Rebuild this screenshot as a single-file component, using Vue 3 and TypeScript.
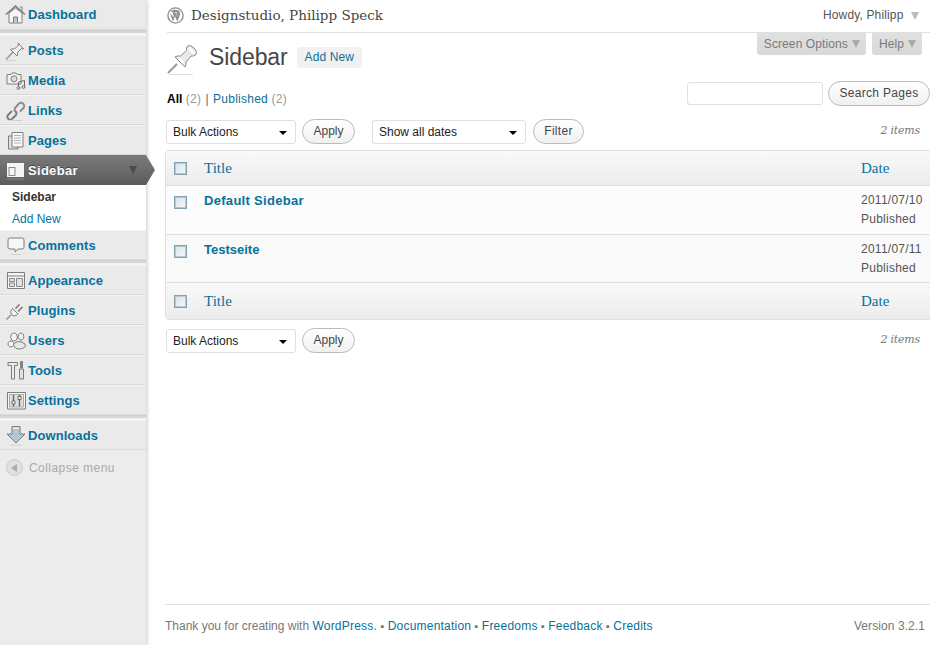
<script setup lang="ts">
interface Shape { d: string; fill?: string; stroke?: string; sw?: number }
interface Item { label: string; icon: Shape[]; active?: boolean }

const g = '#7d7d7d'
const icons: Record<string, Shape[]> = {
  home: [
    { d: 'M5 10 V20 H18 V10 L11.5 5 Z', fill: '#f6f6f6', stroke: g },
    { d: 'M2 11.5 L11.5 3 L21 11.5', fill: 'none', stroke: g, sw: 1.5 },
    { d: 'M9.5 20 V14 H13.5 V20', fill: '#c4c4c4', stroke: g },
    { d: 'M16 4 H18 V8', fill: 'none', stroke: g }
  ],
  pin: [
    { d: 'M2 20.5 L9 13', fill: 'none', stroke: '#999', sw: 1.4 },
    { d: 'M6.5 10.5 L13 17 Q14 15 13.5 13.5 L17.5 9.5 L19.5 10 L14 4 L14.5 6 L10.5 10 Q8 9.5 6.5 10.5 Z', fill: '#f2f2f2', stroke: g },
    { d: 'M2 21.5 H12', fill: 'none', stroke: '#d2d2d2' }
  ],
  media: [
    { d: 'M3 5.5 H7 L8 4 H12 L13 5.5 H17 V15 H3 Z', fill: '#f0f0f0', stroke: g },
    { d: 'M10 6.8 A3 3 0 1 0 10 12.8 A3 3 0 1 0 10 6.8 Z', fill: '#dcdcdc', stroke: g },
    { d: 'M14.5 18.5 V13 L20.5 11.5 V17', fill: 'none', stroke: '#666' },
    { d: 'M13 19 A1.5 1.3 0 1 0 16 19 A1.5 1.3 0 1 0 13 19 Z M18 18 A1.5 1.3 0 1 0 21 18 A1.5 1.3 0 1 0 18 18 Z', fill: '#f4f4f4', stroke: '#666' }
  ],
  links: [
    { d: 'M8 12 L4 16 A2.8 2.8 0 0 0 8.5 19.5 L12 16 A2.8 2.8 0 0 0 11 12', fill: 'none', stroke: '#7d7d7d', sw: 2 },
    { d: 'M12 13 A2.8 2.8 0 0 1 11 9 L14.5 5 A2.8 2.8 0 0 1 19.5 9 L16 12.5', fill: 'none', stroke: '#8d8d8d', sw: 2 },
    { d: 'M4 21.5 H18', fill: 'none', stroke: '#d2d2d2' }
  ],
  pages: [
    { d: 'M4.5 7 H14 V20 H4.5 Z', fill: '#dedede', stroke: g },
    { d: 'M8 3.5 H19 V18 H8 Z', fill: '#f8f8f8', stroke: g },
    { d: 'M10 6.5 H17 M10 9 H17 M10 11.5 H17 M10 14 H17', fill: 'none', stroke: '#b4b4b4' }
  ],
  sidebar: [
    { d: 'M3 4 H20 V18 H3 Z', fill: '#f5f5f5' },
    { d: 'M4.5 8 H11.5 V17 H4.5 Z', fill: '#8a8a8a' },
    { d: 'M5.5 9 H10.5 V16 H5.5 Z', fill: '#f5f5f5' },
    { d: 'M3 20 H20', fill: 'none', stroke: '#8a8a8a' }
  ],
  comments: [
    { d: 'M6 4 H18 Q20 4 20 6 V13 Q20 15 18 15 H14 L11 18 V15 H6 Q4 15 4 13 V6 Q4 4 6 4 Z', fill: '#f6f6f6', stroke: g },
    { d: 'M6 20.5 H17', fill: 'none', stroke: '#d2d2d2' }
  ],
  appearance: [
    { d: 'M3.5 3.5 H20.5 V19.5 H3.5 Z', fill: '#f6f6f6', stroke: g },
    { d: 'M3.5 7 H20.5', fill: 'none', stroke: g },
    { d: 'M5.5 9.5 H10.5 V12.5 H5.5 Z M5.5 14 H10.5 V17.5 H5.5 Z M12.5 9.5 H18.5 V17.5 H12.5 Z', fill: '#e2e2e2', stroke: '#8a8a8a' }
  ],
  plugins: [
    { d: 'M8.5 9.5 L14 15 Q10.5 18.5 7.5 15.5 Q5 13 8.5 9.5 Z', fill: '#f2f2f2', stroke: g },
    { d: 'M11.5 9.5 L15.5 5.5 M14 12.5 L18.5 8', fill: 'none', stroke: g, sw: 1.6 },
    { d: 'M7 16 L2.5 20.5', fill: 'none', stroke: '#999', sw: 1.6 }
  ],
  users: [
    { d: 'M10 4 A3.3 4 0 1 0 10.01 4 Z', fill: '#f6f6f6', stroke: g },
    { d: 'M17 4 A2.8 3.6 0 1 0 17.01 4 Z', fill: '#efefef', stroke: g },
    { d: 'M7 12 A3 3 0 1 0 7.01 12 Z', fill: '#f6f6f6', stroke: g },
    { d: 'M9.5 15 Q15 10 21 15 Q23 19 15.5 20 Q10 20 9.5 15 Z', fill: '#e8e8e8', stroke: g }
  ],
  tools: [
    { d: 'M4 3.5 H13.5 V6.5 H10.5 V20 H7.5 V6.5 H4 Z', fill: '#ececec', stroke: g },
    { d: 'M16.5 2.5 H18.5 V9 H16.5 Z', fill: '#8d8d8d', stroke: g },
    { d: 'M15.5 10 H19.5 V20 H15.5 Z', fill: '#e2e2e2', stroke: g }
  ],
  settings: [
    { d: 'M3.5 3.5 H21.5 V20 H3.5 Z', fill: '#f6f6f6', stroke: g },
    { d: 'M5.5 5.5 H19.5 V18 H5.5 Z', fill: '#e0e0e0', stroke: '#aaa' },
    { d: 'M9.5 6 V17.5 M15.5 6 V17.5', fill: 'none', stroke: '#666', sw: 1.4 },
    { d: 'M8 12 H11 V15 H8 Z M14 7.5 H17 V10.5 H14 Z', fill: '#fff', stroke: '#666' }
  ],
  downloads: [
    { d: 'M8 2.5 H16 V10 H21 L12 19 L3 10 H8 Z', fill: '#b4c6d4', stroke: g },
    { d: 'M9 3.5 H15 V5 H9 Z', fill: '#e6edf2' },
    { d: 'M6 21 H18', fill: 'none', stroke: '#d2d2d2' }
  ]
}

const groups: Item[][] = [
  [{ label: 'Dashboard', icon: icons.home }],
  [
    { label: 'Posts', icon: icons.pin },
    { label: 'Media', icon: icons.media },
    { label: 'Links', icon: icons.links },
    { label: 'Pages', icon: icons.pages },
    { label: 'Sidebar', icon: icons.sidebar, active: true },
    { label: 'Comments', icon: icons.comments }
  ],
  [
    { label: 'Appearance', icon: icons.appearance },
    { label: 'Plugins', icon: icons.plugins },
    { label: 'Users', icon: icons.users },
    { label: 'Tools', icon: icons.tools },
    { label: 'Settings', icon: icons.settings }
  ],
  [{ label: 'Downloads', icon: icons.downloads }]
]

const rows = [
  { title: 'Default Sidebar', date: '2011/07/10' },
  { title: 'Testseite', date: '2011/07/11' }
]
</script>

<template>
  <div class="wp">
    <aside class="side">
      <template v-for="(group, gi) in groups" :key="gi">
        <div v-if="gi > 0" class="sep"></div>
        <template v-for="item in group" :key="item.label">
          <div class="menu" :class="{ active: item.active }">
            <svg class="mi" width="23" height="23" viewBox="0 0 23 23">
              <path v-for="(s, i) in item.icon" :key="i" :d="s.d" :fill="s.fill" :stroke="s.stroke" :stroke-width="s.sw || 1" />
            </svg>
            <span class="ml">{{ item.label }}</span>
            <i v-if="item.active" class="tri dark"></i>
          </div>
          <div v-if="item.active" class="sub">
            <div class="cur">Sidebar</div>
            <div class="link">Add New</div>
          </div>
        </template>
      </template>
      <div class="collapse">
        <span class="cbtn"><i></i></span>
        <span>Collapse menu</span>
      </div>
    </aside>

    <main class="main">
      <header class="top">
        <svg class="logo" width="17" height="17" viewBox="0 0 17 17">
          <circle cx="8.5" cy="8.5" r="7.6" fill="#fff" stroke="#8f8f8f" stroke-width="1.4" />
          <path d="M2.8 6 L6 14.4 L8 9.4 L10.4 14.8 L13 7.4 Q13.6 5.4 12 5 H13.6 Q10.8 2 7 2.8 Q4.6 3.2 3.4 5 H5.8 L7 5.4 H5.4 L7.6 11 M8 5 H10.8 L10.2 5.4 H9 L11 10.6" fill="#8f8f8f" />
        </svg>
        <span class="site">Designstudio, Philipp Speck</span>
        <span class="howdy">Howdy, Philipp <i class="tri"></i></span>
      </header>

      <div class="tabs">
        <div class="tab">Screen Options <i class="tri"></i></div>
        <div class="tab">Help <i class="tri"></i></div>
      </div>

      <div class="title">
        <svg width="32" height="32" viewBox="0 0 32 32">
          <path d="M1 30 L10 21" stroke="#9a9a9a" stroke-width="2" fill="none" />
          <path d="M8 14 L18 24 Q19.5 21 19 19 L24 13 Q26.5 13.5 28.5 12 Q31 9 27 5 Q23 1 20.5 3 Q19 5 19.5 7.5 L13.5 13 Q10.5 12.5 8 14 Z" fill="#e9e9e9" stroke="#8a8a8a" />
          <path d="M22 5 L27 10" stroke="#fff" stroke-width="2.5" fill="none" />
          <path d="M11.5 15 L17 20.5" stroke="#fff" stroke-width="2" fill="none" />
          <path d="M2 31.5 H26" stroke="#dedede" fill="none" />
        </svg>
        <h2>Sidebar</h2>
        <a class="addnew">Add New</a>
      </div>

      <div class="filters">
        <div class="status">
          <b>All</b> <span class="n">(2)</span> <span class="bar">|</span> <a>Published</a> <span class="n">(2)</span>
        </div>
        <div class="search">
          <div class="input"></div>
          <div class="btn wide">Search Pages</div>
        </div>
      </div>

      <div class="nav">
        <div class="sel">Bulk Actions<i></i></div>
        <div class="btn apply">Apply</div>
        <div class="sel dates">Show all dates<i></i></div>
        <div class="btn filter">Filter</div>
        <em class="count">2 items</em>
      </div>

      <div class="table">
        <div class="row head">
          <span class="cb"></span><a class="tt">Title</a><a class="dt">Date</a>
        </div>
        <div v-for="(r, i) in rows" :key="r.title" class="row body" :class="{ alt: i === 1 }">
          <span class="cb"></span>
          <a class="name">{{ r.title }}</a>
          <div class="when">{{ r.date }}<br />Published</div>
        </div>
        <div class="row head foot">
          <span class="cb"></span><a class="tt">Title</a><a class="dt">Date</a>
        </div>
      </div>

      <div class="nav lower">
        <div class="sel">Bulk Actions<i></i></div>
        <div class="btn apply">Apply</div>
        <em class="count">2 items</em>
      </div>

      <footer class="foot-bar">
        <span>Thank you for creating with <a>WordPress.</a> <s>▪</s> <a>Documentation</a> <s>▪</s> <a>Freedoms</a> <s>▪</s> <a>Feedback</a> <s>▪</s> <a>Credits</a></span>
        <span class="ver">Version 3.2.1</span>
      </footer>
    </main>
  </div>
</template>

<style>
html, body { margin: 0; overflow: hidden; background: #fff; }
</style>

<style scoped>
.wp {
  display: flex;
  height: 645px;
  overflow: hidden;
  font-family: "Liberation Sans", Arial, sans-serif;
  font-size: 12px;
  color: #333;
  background: #fff;
}
a { color: #08719a; text-decoration: none; }

.side {
  width: 146px;
  flex: none;
  background: #ececec;
  box-shadow: 1px 0 4px rgba(0, 0, 0, 0.22);
  position: relative;
  z-index: 1;
}
.menu {
  position: relative;
  height: 30px;
  box-sizing: border-box;
  display: flex;
  align-items: center;
  background: #eaeaea;
  border-top: 1px solid #f4f4f4;
  border-bottom: 1px solid #dadada;
}
.menu:first-child { border-top: 0; }
.mi { margin-left: 4px; flex: none; }
.ml {
  margin-left: 1px;
  font-weight: 700;
  font-size: 13px;
  letter-spacing: 0.07px;
  color: #08719a;
}
.menu.active {
  background: linear-gradient(#7a7a7a, #5c5c5c);
  border: 0;
}
.menu.active .ml { color: #fff; text-shadow: 0 -1px 0 #444; letter-spacing: 0.3px; }
.menu.active::after {
  content: "";
  position: absolute;
  left: 100%;
  top: 0;
  width: 9px;
  height: 30px;
  background: linear-gradient(#7a7a7a, #5c5c5c);
  clip-path: polygon(0 0, 100% 50%, 0 100%);
}
.tri {
  display: inline-block;
  width: 0;
  height: 0;
  border-left: 4.5px solid transparent;
  border-right: 4.5px solid transparent;
  border-top: 8px solid #aaa;
  vertical-align: -1px;
}
.tri.dark {
  position: absolute;
  right: 9px;
  top: 11px;
  border-top-color: #4a4a4a;
}
.sub {
  height: 45px;
  box-sizing: border-box;
  padding: 1px 0 0 12px;
  background: #fff;
  line-height: 22px;
  font-size: 12px;
}
.sub .cur { font-weight: 700; color: #333; }
.sub .link { color: #08719a; }
.sep {
  height: 5px;
  box-sizing: border-box;
  background: #d6d6d6;
  border-top: 1px solid #cfcfcf;
  border-bottom: 2px solid #f4f4f4;
}
.collapse {
  display: flex;
  align-items: center;
  height: 35px;
  padding-left: 6px;
  gap: 6px;
  color: #aaa;
  font-size: 12px;
  letter-spacing: 0.45px;
}
.cbtn {
  width: 17px;
  height: 17px;
  box-sizing: border-box;
  border-radius: 50%;
  border: 1px solid #ccc;
  background: #e0e0e0;
  display: flex;
  align-items: center;
  justify-content: center;
}
.cbtn i {
  border-top: 4px solid transparent;
  border-bottom: 4px solid transparent;
  border-right: 6px solid #aaa;
  margin-left: -2px;
}

.main {
  flex: 1;
  min-width: 0;
  display: flex;
  flex-direction: column;
  padding-left: 19px;
}
.top {
  margin-left: 2px;
  height: 32px;
  border-bottom: 1px solid #dfdfdf;
  display: flex;
  align-items: center;
}
.logo { flex: none; margin-top: -2px; }
.site {
  margin-left: 7px;
  font-family: "DejaVu Serif", Georgia, serif;
  font-size: 13.5px;
  color: #464646;
  margin-top: -2px;
}
.howdy {
  margin-left: auto;
  margin-right: 11px;
  color: #555;
  font-size: 12px;
  letter-spacing: 0.15px;
  margin-top: -3px;
}
.howdy .tri { margin-left: 4px; border-top-color: #bbb; }

.tabs {
  display: flex;
  justify-content: flex-end;
  gap: 6px;
  height: 22px;
  padding-right: 8px;
}
.tab {
  display: flex;
  align-items: center;
  gap: 4px;
  height: 22px;
  box-sizing: border-box;
  padding: 0 6px 0 7px;
  background: linear-gradient(#e0e0e0, #d8d8d8);
  border-radius: 0 0 3px 3px;
  color: #7a7a7a;
  letter-spacing: 0.1px;
}

.title {
  display: flex;
  align-items: center;
  height: 34px;
  margin: -15px 0 0 2px;
}
.title svg { flex: none; margin-top: 3px; }
.title h2 {
  margin: 0 0 0 10px;
  font-weight: 400;
  font-size: 23px;
  color: #464646;
  letter-spacing: -0.1px;
}
.addnew {
  margin-left: 9px;
  padding: 0 8px;
  height: 21px;
  line-height: 21px;
  background: #f1f1f1;
  border-radius: 3px;
  letter-spacing: 0.1px;
  margin-top: 1px;
}

.filters {
  display: flex;
  justify-content: space-between;
  margin: 7px 0 0 2px;
  height: 25px;
}
.status { padding-top: 11px; color: #333; }
.status b { color: #000; }
.status .n { color: #999; letter-spacing: 0.3px; }
.status .bar { color: #666; margin: 0 1px; }
.status a { letter-spacing: 0.25px; }
.search { display: flex; gap: 5px; }
.input {
  width: 136px;
  height: 23px;
  margin-top: 1px;
  box-sizing: border-box;
  border: 1px solid #dfdfdf;
  border-radius: 3px;
  background: #fff;
}
.btn {
  box-sizing: border-box;
  height: 25px;
  line-height: 23px;
  border: 1px solid #bbb;
  border-radius: 13px;
  background: linear-gradient(#fff, #f0f0f0);
  color: #464646;
  text-align: center;
  letter-spacing: 0.3px;
}
.wide { width: 102px; }
.apply { width: 53px; margin-left: 6px; letter-spacing: 0; }
.filter { width: 51px; margin-left: 7px; }

.nav {
  display: flex;
  align-items: flex-start;
  height: 25px;
  margin: 13px 0 0 1px;
  padding-right: 10px;
}
.sel {
  position: relative;
  box-sizing: border-box;
  width: 130px;
  height: 24px;
  margin-top: 1px;
  padding-left: 6px;
  line-height: 22px;
  border: 1px solid #dfdfdf;
  border-radius: 3px;
  background: #fff;
  color: #222;
}
.sel i {
  position: absolute;
  right: 8px;
  top: 10px;
  border-left: 4px solid transparent;
  border-right: 4px solid transparent;
  border-top: 4px solid #000;
}
.dates { width: 154px; margin-left: 17px; }
.count {
  margin-left: auto;
  font-family: "DejaVu Serif", Georgia, serif;
  font-size: 11px;
  color: #777;
  line-height: 24px;
  letter-spacing: -0.2px;
}

.table {
  margin-top: 6px;
  border: 1px solid #dfdfdf;
  border-right: 0;
  border-radius: 4px 0 0 4px;
  background: #fcfcfc;
}
.row {
  position: relative;
  display: grid;
  grid-template-columns: 38px 1fr 69px;
  box-sizing: border-box;
}
.head {
  height: 35px;
  align-items: center;
  background: linear-gradient(#f9f9f9, #ececec);
  border-bottom: 1px solid #dfdfdf;
  font-family: "Liberation Serif", Georgia, serif;
  font-size: 15px;
}
.foot { border-bottom: 0; height: 36px; }
.cb {
  display: block;
  width: 13px;
  height: 13px;
  margin-left: 8px;
  box-sizing: border-box;
  border: 1px solid #84a0ad;
  box-shadow: inset 0 0 0 1px #b6c8d2;
  background: linear-gradient(135deg, #d8e3ec, #f6f8fa);
}
.body {
  height: 49px;
  padding-top: 9px;
  border-bottom: 1px solid #dfdfdf;
  line-height: 19px;
}
.body.alt { height: 48px; background: #f9f9f9; }
.body .cb { margin-top: 1px; }
.body .name {
  font-weight: 700;
  font-size: 13px;
  letter-spacing: 0.3px;
  line-height: 12px;
}
.body.alt .name { letter-spacing: 0; }
.when {
  color: #555;
  letter-spacing: 0.25px;
  margin-top: -4px;
}

.lower { margin-top: 8px; }

.foot-bar {
  margin-top: auto;
  height: 41px;
  box-sizing: border-box;
  border-top: 1px solid #dfdfdf;
  display: flex;
  justify-content: space-between;
  padding: 14px 5px 0 0;
  color: #777;
}
.foot-bar a { letter-spacing: 0.22px; }
.foot-bar s { text-decoration: none; font-size: 11px; color: #777; }
.ver { color: #777; letter-spacing: 0.08px; }
</style>
